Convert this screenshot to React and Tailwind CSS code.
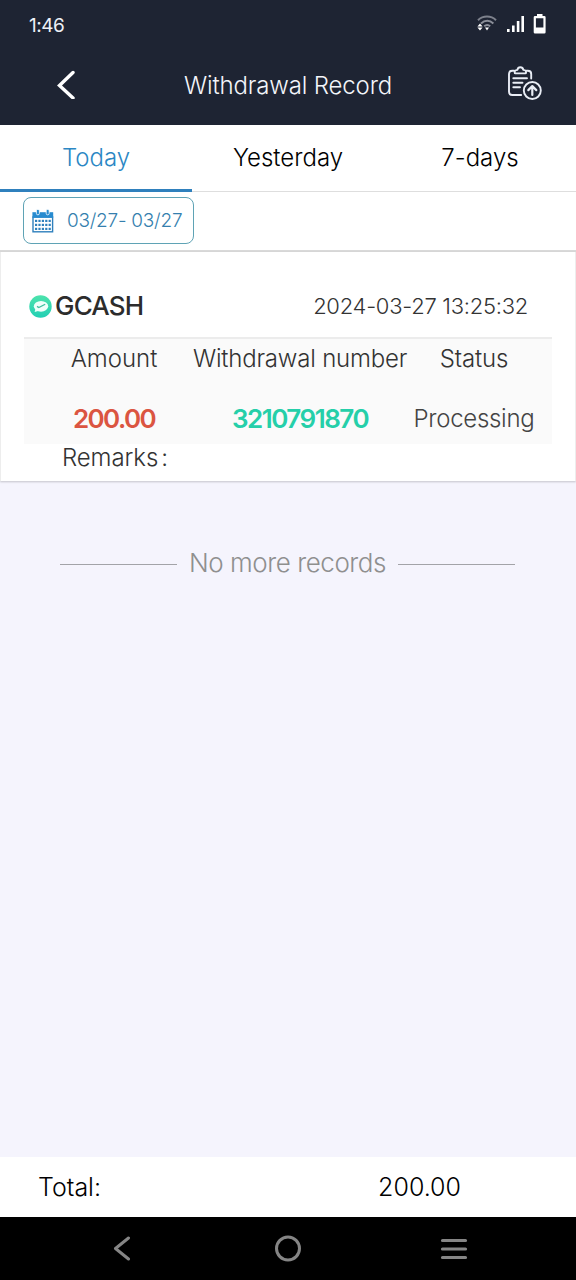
const tabs = ["Today", "Yesterday", "7-days"];

const record = {
  method: "GCASH",
  time: "2024-03-27 13:25:32",
  amount: "200.00",
  number: "3210791870",
  status: "Processing",
};

const WifiIcon = () => (
  <svg width="20" height="18" viewBox="0 0 20 18" fill="none">
    <path d="M1 5.2C6 .4 14 .4 19 5.2" stroke="#7d818c" strokeWidth="2" />
    <path d="M4 8.4C7.8 5 12.6 5 16.4 8.4" stroke="#8b8f99" strokeWidth="2" />
    <path d="M7.2 11.2C9 9.7 11.4 9.7 13.2 11.2" stroke="#8b8f99" strokeWidth="2" />
    <path d="M.4 11.4L3 8.4L5.6 11.4ZM.4 12.6L3 15.6L5.6 12.6Z" fill="#fff" />
    <path d="M8 12.6H12L10 15.4Z" fill="#fff" />
  </svg>
);

const SignalIcon = () => (
  <svg width="18" height="17" viewBox="0 0 18 17" fill="#fff">
    <rect x="0" y="13" width="2.6" height="3" />
    <rect x="5" y="9.5" width="2.6" height="6.5" />
    <rect x="9.8" y="5" width="2.6" height="11" />
    <rect x="14.4" y="0" width="2.6" height="16" />
  </svg>
);

const BatteryIcon = () => (
  <svg width="14" height="20" viewBox="0 0 14 20">
    <path
      d="M4 0H9.5V2H11.3Q12.6 2 12.6 3.3V18.3Q12.6 19.6 11.3 19.6H2Q.7 19.6 .7 18.3V3.3Q.7 2 2 2H4ZM2.9 4.3V13.6H10.4V4.3Z"
      fill="#fff"
      fillRule="evenodd"
    />
  </svg>
);

const RecordIcon = () => (
  <svg width="36" height="36" viewBox="0 0 36 36" fill="none" stroke="#e9edf5" strokeWidth="1.9" strokeLinecap="round" strokeLinejoin="round">
    <path d="M7 4.8H5.3Q2 4.8 2 8V25.7Q2 29 5.3 29H14.2" />
    <path d="M19.5 4.8H20.8Q24.2 4.8 24.2 8V12.5" />
    <path d="M7.7 6.8V5.8Q7.7 4.3 9.3 4.1L10.4 3.8C11 .4 15.6 .4 16.3 3.8L17.5 4.1Q19 4.3 19 5.8V6.8Q19 7.4 18.4 7.4H8.3Q7.7 7.4 7.7 6.8Z" />
    <path d="M6.3 12.3H20M6.3 16.8H15.5M6.3 21.2H13" />
    <circle cx="25.3" cy="24.5" r="8.5" />
    <path d="M25.3 29V20.5M21.3 24.1L25.3 20.1L29.3 24.1" strokeWidth="2.2" />
  </svg>
);

const CalendarIcon = () => (
  <svg width="22" height="24" viewBox="0 0 22 24">
    <rect x="1" y="8" width="19.6" height="14.8" fill="#fff" stroke="#2f80bd" strokeWidth="1.4" />
    <path d="M.4 3.2H21.2V8.8H.4Z" fill="#278bd0" />
    <g fill="#278bd0" stroke="#fff" strokeWidth=".8">
      <rect x="4.4" y=".4" width="3" height="5.4" rx="1.4" />
      <rect x="14.2" y=".4" width="3" height="5.4" rx="1.4" />
    </g>
    <g fill="#2f80bd">
      {[10.8, 14.8, 18.8].map((y) =>
        [3, 6.4, 9.8, 13.2, 16.6].map((x) => (
          <rect key={`${x}-${y}`} x={x} y={y} width="2.2" height="2.2" />
        ))
      )}
    </g>
  </svg>
);

const MethodIcon = () => (
  <svg width="23" height="23" viewBox="0 0 23 23">
    <defs>
      <linearGradient id="mint" x1="0" y1="0" x2="0" y2="1">
        <stop offset="0" stopColor="#4de3ac" />
        <stop offset="1" stopColor="#22cfb4" />
      </linearGradient>
    </defs>
    <circle cx="11.5" cy="11.5" r="11.2" fill="url(#mint)" />
    <ellipse cx="12" cy="11.3" rx="7.2" ry="5.4" fill="#effffa" />
    <path d="M6.6 13.5L5.6 17L10 15.8Z" fill="#effffa" />
    <path d="M8 11.4L9.8 12.6L16.2 9.2" fill="none" stroke="#3fbf9f" strokeWidth="1.3" />
  </svg>
);

function Header() {
  return (
    <header className="h-[125px] bg-[#1e2433] text-white">
      <div className="flex h-12 items-center justify-between pl-[29px] pr-[29px]">
        <span className="pt-[4px] text-[19px] font-normal tracking-[-0.5px] text-[#eef1f7]">1:46</span>
        <div className="flex items-center">
          <WifiIcon />
          <span className="ml-[10px]"><SignalIcon /></span>
          <span className="ml-[8px]"><BatteryIcon /></span>
        </div>
      </div>
      <div className="flex h-[76px] items-center justify-between pb-[5px] pl-[56px] pr-[33px]">
        <svg width="20" height="30" viewBox="0 0 20 30" fill="none" stroke="#fff" strokeWidth="3.4" strokeLinecap="round">
          <path d="M17 3.5L3.5 16.5L17 29" />
        </svg>
        <h1 className="mr-[7px] pt-[5px] text-[24px] font-light tracking-[-0.15px] text-[#f3f5fa]">Withdrawal Record</h1>
        <RecordIcon />
      </div>
    </header>
  );
}

function RecordCard() {
  return (
    <section className="h-[229px] border-x border-[#ededed] bg-white px-[23px] shadow-[0_1px_2px_rgba(0,0,0,0.2)]">
      <div className="flex h-[85px] items-center justify-between pl-[5px] pr-6 pt-[23px]">
        <div className="flex items-center">
          <MethodIcon />
          <span className="ml-[3px] pb-px text-[26px] font-medium tracking-[-0.8px] text-[#2c2c2c]">{record.method}</span>
        </div>
        <span className="text-[22px] font-light tracking-[-0.27px] text-[#333]">{record.time}</span>
      </div>
      <div className="grid h-[107px] grid-cols-[180px_192px_156px] grid-rows-[40px_1fr] border-t-2 border-[#ececec] bg-[#fafafa] text-[24px] font-light leading-[40px] text-[#333]">
        <span className="flex justify-center">Amount</span>
        <span className="flex justify-center whitespace-nowrap tracking-[-0.2px]">Withdrawal number</span>
        <span className="flex justify-center tracking-[-0.1px]">Status</span>
        <span className="flex items-center justify-center pt-[14px] text-[26px] font-semibold tracking-[-1.6px] text-[#db5541]">{record.amount}</span>
        <span className="flex items-center justify-center pt-[14px] text-[26px] font-semibold tracking-[-1.5px] text-[#25cfa9]">{record.number}</span>
        <span className="flex items-center justify-center pt-[15px] tracking-[-0.3px] text-[#444]">{record.status}</span>
      </div>
      <p className="pl-[38px] text-[24px] font-light leading-[28px] tracking-[-0.1px] text-[#333]">
        Remarks<span className="ml-[3px]">:</span>
      </p>
    </section>
  );
}

function SystemNav() {
  return (
    <nav className="flex h-[63px] items-center justify-between bg-black pl-[112px] pr-[108px]">
      <svg width="20" height="26" viewBox="0 0 20 26" fill="none" stroke="#858585" strokeWidth="3" strokeLinecap="round" strokeLinejoin="round">
        <path d="M16.5 2L3.5 12.5L16.5 23" />
      </svg>
      <svg className="ml-1" width="28" height="28" viewBox="0 0 28 28" fill="none" stroke="#858585" strokeWidth="3">
        <circle cx="14" cy="13.5" r="11.5" />
      </svg>
      <svg width="28" height="24" viewBox="0 0 28 24" fill="none" stroke="#858585" strokeWidth="3.2" strokeLinecap="round">
        <path d="M2.5 3.5H25.5M2.5 12H25.5M2.5 20.5H25.5" />
      </svg>
    </nav>
  );
}

export default function App() {
  return (
    <div className="flex h-[1280px] w-[576px] flex-col overflow-hidden bg-[#f5f4fd] font-[Inter,sans-serif]">
      <Header />

      {/* Period tabs */}
      <div className="grid h-[67px] grid-cols-3 bg-white text-[24px] font-light">
        {tabs.map((tab, i) => (
          <button
            key={tab}
            className={
              i === 0
                ? "border-b-[3px] border-[#2f80bd] pt-[1px] text-[#2b87c4]"
                : "border-b border-[#dedede] pb-px text-[#000]"
            }
          >
            {tab}
          </button>
        ))}
      </div>

      {/* Date range */}
      <div className="h-[60px] border-b-2 border-[#d9d9d9] bg-white pl-[23px] pt-[5px]">
        <button className="flex h-[47px] w-[171px] items-center rounded-lg border border-[#5fa3b5] pl-2 text-[19px] font-light tracking-[-0.25px] text-[#357fae]">
          <CalendarIcon />
          <span className="ml-[13px] whitespace-nowrap pt-[2px]">03/27- 03/27</span>
        </button>
      </div>

      <RecordCard />

      <div className="mt-[64px] flex items-center justify-center gap-3 pr-px text-[26px] font-light leading-[36px] tracking-[-0.45px] text-[#8f8f8f]">
        <span className="mt-[2px] h-px w-[117px] bg-[#a3a3a8]" />
        <span className="whitespace-nowrap">No more records</span>
        <span className="mt-[2px] h-px w-[117px] bg-[#a3a3a8]" />
      </div>

      <footer className="mt-auto">
        <div className="flex h-[60px] items-center justify-between bg-white pl-[38px] pr-[115px] pt-[2px] text-[25px] font-light text-[#000]">
          <span>Total:</span>
          <span>200.00</span>
        </div>
        <SystemNav />
      </footer>
    </div>
  );
}
